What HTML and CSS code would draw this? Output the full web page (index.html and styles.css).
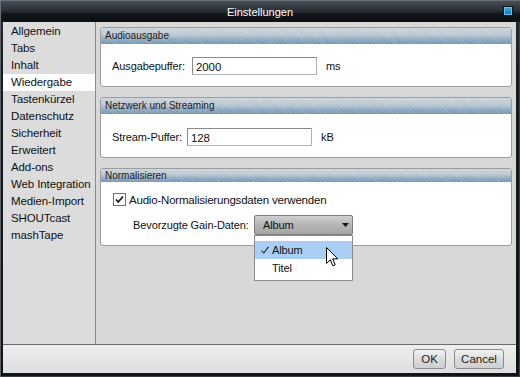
FILE: index.html
```html
<!DOCTYPE html>
<html>
	<head>
		<meta charset="UTF-8">
		<title>Einstellungen</title>
		<link rel="stylesheet" href="styles.css">
	</head>
	<body>
		<div class="window">
			<div class="titlebar">
				<span></span>
				<span class="title">Einstellungen</span>
				<span class="tb-btn"></span>
			</div>
			<div class="frame">
				<div class="main">
					<ul class="nav">
						<li>Allgemein</li>
						<li>Tabs</li>
						<li>Inhalt</li>
						<li class="active">Wiedergabe</li>
						<li>Tastenkürzel</li>
						<li>Datenschutz</li>
						<li>Sicherheit</li>
						<li>Erweitert</li>
						<li>Add-ons</li>
						<li>Web Integration</li>
						<li>Medien-Import</li>
						<li>SHOUTcast</li>
						<li>mashTape</li>
					</ul>
					<div class="panel">
						<section class="group">
							<div class="group-head">Audioausgabe</div>
							<div class="group-body">
								<div class="field">
									<span class="lbl lbl-out">Ausgabepuffer:</span>
									<div class="input">2000</div>
									<span class="unit">ms</span>
								</div>
							</div>
						</section>
						<section class="group">
							<div class="group-head">Netzwerk und Streaming</div>
							<div class="group-body body-net">
								<div class="field">
									<span class="lbl lbl-net">Stream-Puffer:</span>
									<div class="input">128</div>
									<span class="unit">kB</span>
								</div>
							</div>
						</section>
						<section class="group g-norm">
							<div class="group-head">Normalisieren</div>
							<div class="group-body body-norm">
								<div class="check-row">
									<svg class="checkbox" width="13" height="13" viewBox="0 0 13 13">
										<rect x="0.5" y="0.5" width="12" height="12" fill="#fff" stroke="#6f6f6f"/>
										<path d="M3 6.5 L5.2 9 L10 3.5" fill="none" stroke="#111" stroke-width="1.6"/>
									</svg>
									<span>Audio-Normalisierungsdaten verwenden</span>
								</div>
								<div class="gain-row">
									<span class="lbl lbl-gain">Bevorzugte Gain-Daten:</span>
									<div class="combo">
										<span>Album</span>
										<svg class="arrow" width="7" height="4" viewBox="0 0 7 4"><path d="M0 0 H7 L3.5 4 Z" fill="#111"/></svg>
										<div class="popup">
											<div class="opt sel">
												<svg class="tick" width="8" height="8" viewBox="0 0 8 8"><path d="M0.5 4.5 L2.8 7 L7.5 0.8" fill="none" stroke="#222" stroke-width="1.1"/></svg>
												<span>Album</span>
											</div>
											<div class="opt"><span>Titel</span></div>
											<svg class="cursor" width="13" height="20" viewBox="0 0 13 20">
												<path d="M0.5 0.5 V16.5 L4.3 12.8 L6.8 18.8 L9.2 17.8 L6.7 11.9 H11.8 Z" fill="#fff" stroke="#000" stroke-linejoin="miter"/>
											</svg>
										</div>
									</div>
								</div>
							</div>
						</section>
					</div>
				</div>
				<div class="footer">
					<button class="btn btn-ok">OK</button>
					<button class="btn btn-cancel">Cancel</button>
				</div>
			</div>
		</div>
	</body>
</html>
```

FILE: styles.css
```css
body{
	margin: 0;
	background: #0d1014;
	font-family: "Liberation Sans", Arial, sans-serif;
}
.window{
	width: 520px;
	height: 377px;
	display: flex;
	flex-direction: column;
	background: linear-gradient(#2a3037, #151a20 20%, #101418);
	box-shadow: inset 1px 1px 0 #5a6068, inset -1px -1px 0 #3a4048;
}
/* title bar */
.titlebar{
	height: 22px;
	display: grid;
	grid-template-columns: 1fr auto 1fr;
	align-items: center;
	background: linear-gradient(#4e545c, #353b42 30%, #262b31 55%, #12161b 62%, #0c0f13);
	box-shadow: inset 1px 1px 0 #6a7078;
}
.title{
	color: #fff;
	font-size: 11px;
	padding-top: 1px;
}
.tb-btn{
	justify-self: end;
	width: 8px;
	height: 8px;
	margin-right: 7px;
	margin-top: -1px;
	border: 1px solid #0b1822;
	background: linear-gradient(#3fb0e4, #1f8fca 60%, #1a78ae);
	box-shadow: inset 0 0 0 1px #5cc2ee;
}
/* main frame */
.frame{
	flex: 1;
	margin: 0 4px 4px 3px;
	display: flex;
	flex-direction: column;
	background: #dadada;
	font-size: 11px;
	letter-spacing: -0.1px;
	color: #111;
}
.main{
	height: 322px;
	display: flex;
	border-bottom: 1px solid #6c6c6c;
}
.nav{
	list-style: none;
	margin: 0;
	padding: 1px 0 0 0;
	width: 92px;
	border-right: 1px solid #8a8a8a;
	background: #dcdcdc;
	font-size: 11.5px;
	letter-spacing: -0.1px;
}
.nav li{
	height: 17px;
	line-height: 17px;
	padding-left: 8px;
	white-space: nowrap;
}
.nav .active{
	background: #fff;
}
.panel{
	flex: 1;
	padding: 5px 4px;
	display: flex;
	flex-direction: column;
	gap: 10px;
	background: #d8d8d8;
}
/* group boxes */
.group{
	border: 1px solid #9c9c9c;
	border-radius: 3px;
	background: #fff;
}
.group-head{
	height: 16px;
	line-height: 16px;
	padding-left: 4px;
	font-size: 10px;
	letter-spacing: 0;
	color: #1c1c1c;
	border-radius: 2px 2px 0 0;
	background:
		repeating-linear-gradient(45deg, rgba(255,255,255,0.13) 0 1px, transparent 1px 3px),
		linear-gradient(#cdd5dc, #b8c5d0 45%, #8eaac3 72%, #7596b4);
}
.g-norm .group-head{
	height: 13px;
	line-height: 14px;
}
.group-body{
	padding: 13px 11px 11px;
}
.body-net{
	padding-top: 14px;
}
.field{
	display: flex;
	align-items: center;
	height: 18px;
}
.lbl{
	white-space: nowrap;
}
.lbl-out{ width: 80px; }
.lbl-net{ width: 75px; }
.input{
	width: 120px;
	height: 16px;
	line-height: 18px;
	padding-left: 3px;
	border: 1px solid #8a8a8a;
	border-bottom-color: #b4b4b4;
	border-right-color: #b4b4b4;
	background: #fff;
	font-size: 11.5px;
}
.unit{
	margin-left: 9px;
}
.body-norm{
	padding: 11px 11px 10px 12px;
	display: flex;
	flex-direction: column;
	gap: 9px;
}
.check-row{
	display: flex;
	align-items: center;
	gap: 3px;
	height: 13px;
	font-size: 11.5px;
	letter-spacing: -0.2px;
}
.checkbox{
	display: block;
}
.gain-row{
	display: flex;
	align-items: center;
	height: 20px;
	padding-left: 20px;
}
.lbl-gain{ width: 121px; }
.combo{
	position: relative;
	width: 89px;
	height: 18px;
	line-height: 19px;
	padding-left: 8px;
	border: 1px solid #7c7c7c;
	border-radius: 2px;
	background: linear-gradient(#cfcfcf, #b5b5b5 50%, #a6a6a6);
	display: flex;
	justify-content: space-between;
	align-items: center;
	box-sizing: content-box;
}
.arrow{
	margin-right: 3px;
}
/* dropdown list over the content */
.popup{
	position: absolute;
	left: -1px;
	top: 19px;
	width: 97px;
	height: 39px;
	padding-top: 5px;
	border: 1px solid #8c8c8c;
	background: #fff;
	box-sizing: content-box;
	line-height: 18px;
}
.opt{
	height: 18px;
	display: flex;
	align-items: center;
	padding-left: 17px;
	position: relative;
}
.opt.sel{
	background: #a9cff5;
}
.tick{
	position: absolute;
	left: 6px;
	top: 5px;
}
.cursor{
	position: absolute;
	left: 71px;
	top: 11px;
}
/* footer */
.footer{
	height: 28px;
	display: flex;
	justify-content: flex-end;
	align-items: center;
	gap: 8px;
	padding-right: 12px;
	background: linear-gradient(#eeeeee, #dedede);
}
.btn{
	height: 20px;
	padding: 0;
	border: 1px solid #8c8c8c;
	border-radius: 3px;
	background: linear-gradient(#f2f2f2, #dcdcdc 50%, #cfcfcf);
	font-family: "Liberation Sans", Arial, sans-serif;
	font-size: 11.5px;
	color: #222;
}
.btn-ok{ width: 33px; }
.btn-cancel{ width: 50px; }
```
